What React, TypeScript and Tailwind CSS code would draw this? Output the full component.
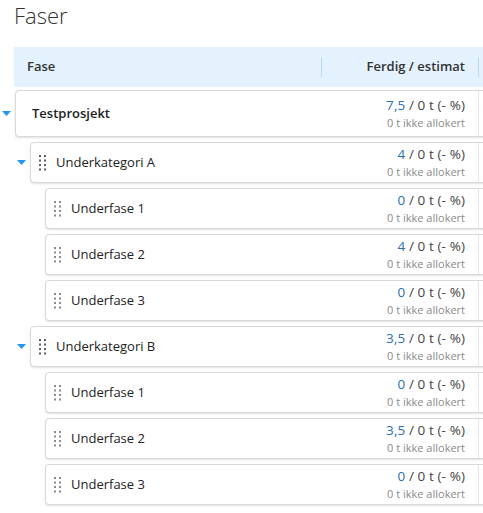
import React from 'react';

type Row = {
  name: string;
  level: 0 | 1 | 2;
  done: string;
  toggle?: boolean;
  handle?: boolean;
  bold?: boolean;
};

const ROWS: Row[] = [
  { name: 'Testprosjekt', level: 0, done: '7,5', toggle: true, bold: true },
  { name: 'Underkategori A', level: 1, done: '4', toggle: true, handle: true },
  { name: 'Underfase 1', level: 2, done: '0', handle: true },
  { name: 'Underfase 2', level: 2, done: '4', handle: true },
  { name: 'Underfase 3', level: 2, done: '0', handle: true },
  { name: 'Underkategori B', level: 1, done: '3,5', toggle: true, handle: true },
  { name: 'Underfase 1', level: 2, done: '0', handle: true },
  { name: 'Underfase 2', level: 2, done: '3,5', handle: true },
  { name: 'Underfase 3', level: 2, done: '0', handle: true },
];

const Handle: React.FC<{ dark?: boolean }> = ({ dark }) => (
  <svg width="8" height="16" viewBox="0 0 8 16" className="shrink-0">
    {[1, 5.5, 10, 14.5].map((y) =>
      [1, 6].map((x) => (
        <rect key={`${x}-${y}`} x={x - 1} y={y - 1} width="2" height="2" fill={dark ? '#5f5f5f' : '#8a8a8a'} />
      ))
    )}
  </svg>
);

const Caret: React.FC = () => (
  <svg width="9" height="5" viewBox="0 0 9 5">
    <path d="M0 0 L9 0 L4.5 5 Z" fill="#2196f3" />
  </svg>
);

const PhaseRow: React.FC<{ row: Row }> = ({ row }) => {
  const indent = row.level === 0 ? 'ml-0' : row.level === 1 ? 'ml-[15px]' : 'ml-[30px]';
  return (
    <div className={`flex items-center ${indent}`}>
      <div className="w-[15px] shrink-0 flex justify-center pr-[3px]">{row.toggle && <Caret />}</div>
      <div
        className={`flex flex-1 items-stretch bg-white border border-[#d9d9d9] rounded-[4px] shadow-[0_1px_2px_rgba(0,0,0,0.12)] ${
          row.level === 0 ? 'h-[47px]' : 'h-[41px]'
        }`}
      >
        <div className={`flex flex-1 items-center ${row.level === 0 ? 'pl-[16px]' : 'pl-[8px] gap-[9px]'}`}>
          {row.handle && <Handle dark={row.level === 1} />}
          <span
            className={`text-[13px] text-[#222] ${row.bold ? 'font-semibold' : 'font-normal'}`}
          >
            {row.name}
          </span>
        </div>
        <div className="flex flex-col justify-center items-end pr-[13px] leading-[17px]">
          <div className="text-[13.5px] text-[#444] tracking-[0.1px]">
            <span className="text-[#2a6fb5]">{row.done}</span> / 0 t (- %)
          </div>
          <div className="text-[11px] text-[#8a8a8a]">0 t ikke allokert</div>
        </div>
        <div className="w-[41px] border-l border-[#e6e6e6]" />
      </div>
    </div>
  );
};

const App: React.FC = () => {
  return (
    <div className="w-[483px] h-[513px] overflow-hidden bg-white font-['Open_Sans',sans-serif] text-[#333]">
      <div className="w-[520px]">
        <h1 className="pl-[14px] pt-[1px] text-[22px] leading-[28px] font-light text-[#333]">Faser</h1>
        <div className="ml-[14px] mt-[18px] h-[40px] bg-[#e3f2fd] flex items-center">
          <div className="flex-1 pl-[13px] text-[13px] font-semibold text-[#333]">Fase</div>
          <div className="w-px h-[20px] bg-[#b9dcf5]" />
          <div className="w-[156px] pr-[13px] text-right text-[13px] font-semibold text-[#333]">Ferdig / estimat</div>
          <div className="w-px h-[20px] bg-[#b9dcf5]" />
          <div className="w-[41px]" />
        </div>
        <div className="mt-[3px] flex flex-col gap-[5px]">
          {ROWS.map((r, i) => (
            <PhaseRow key={i} row={r} />
          ))}
        </div>
      </div>
    </div>
  );
};

export default App;
